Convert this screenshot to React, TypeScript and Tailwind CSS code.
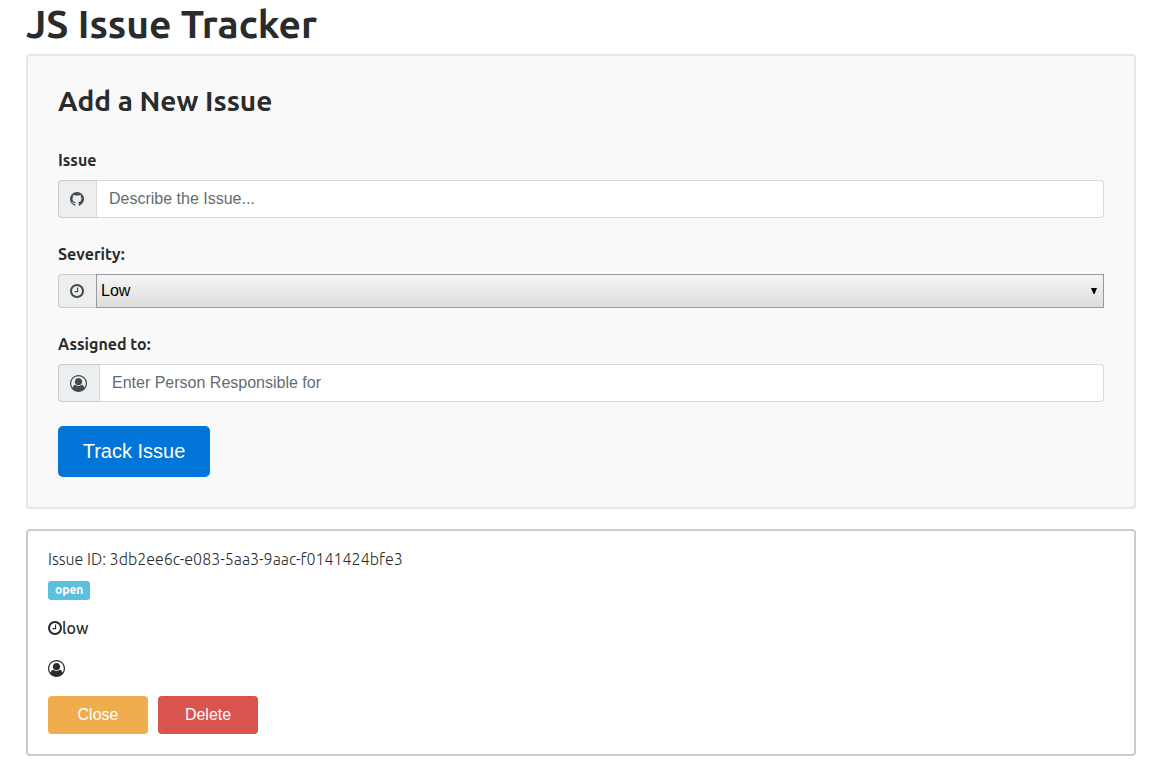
import React, { FormEvent, ReactNode } from "react";

const labelClass =
  "mb-2 block text-base leading-6 font-bold";

const inputClass =
  "h-[38px] min-w-0 flex-1 rounded-r border border-black/15 bg-white px-3 font-['Liberation_Sans',sans-serif] text-base text-[#464a4c] placeholder:text-[#636c72]";

const buttonClass =
  "h-[38px] w-[100px] rounded font-['Liberation_Sans',sans-serif] text-base text-white";

function ClockIcon() {
  return (
    <svg viewBox="0 0 1536 1536" className="h-3.5 w-3.5 shrink-0" fill="currentColor" aria-hidden="true">
      <path d="M896 416v448q0 14-9 23t-23 9H544q-14 0-23-9t-9-23v-64q0-14 9-23t23-9h224V416q0-14 9-23t23-9h64q14 0 23 9t9 23zm416 352q0-148-73-273t-198-198-273-73-273 73-198 198-73 273 73 273 198 198 273 73 273-73 198-198 73-273zm224 0q0 209-103 385.500T1153.500 1433 768 1536t-385.500-103T103 1153.500 0 768t103-385.500T382.500 103 768 0t385.500 103T1433 382.500 1536 768z" />
    </svg>
  );
}

function UserIcon() {
  return (
    <svg viewBox="0 0 1792 1792" className="h-[17px] w-[17px] shrink-0" fill="currentColor" aria-hidden="true">
      <path d="M896 0q182 0 348 71t286 191 191 286 71 348q0 181-70.500 347t-190.500 286-286 191.500T896 1792t-349-71-285.500-191.500-190.500-286T0 896t71-348 191-286T548 71 896 0zm619 1351q149-205 149-455 0-156-61-298t-164-245-245-164-298-61-298 61-245 164-164 245-61 298q0 250 149 455 66-327 306-327 131 128 313 128t313-128q240 0 306 327zm-235-647q0-159-112.500-271.500T896 320 624.500 432.500 512 704t112.500 271.500T896 1088t271.500-112.500T1280 704z" />
    </svg>
  );
}

function GithubIcon() {
  return (
    <svg viewBox="0 0 1536 1536" className="h-3.5 w-3.5 shrink-0" fill="currentColor" aria-hidden="true">
      <path d="M768 0q209 0 385.500 103T1433 382.500 1536 768q0 251-146.500 451.500T1011 1497q-27 5-40-7t-13-30v-211q0-97-52-142 57-6 102.500-18t94-39 81-66.500 53-105T1257 728q0-119-79-206 37-91-8-204-28-9-81 11t-92 44l-38 24q-93-26-192-26t-192 26q-16-11-42.500-27T449 331.500 364 318q-45 113-8 204-79 87-79 206 0 85 20.500 150t52.500 105 80.500 67 94 39 102.500 18q-39 36-49 103-21 10-45 15t-57 5-65.500-21.500T356 1146q-19-32-48.500-52t-49.500-24l-20-3q-21 0-29 4.500t-5 11.500 9 14 13 12l7 5q22 10 43.500 38t31.500 51l10 23q13 38 44 61.500t67 30 69.500 7 55.500-3.500l23-4v143q0 18-13 30t-40 7q-232-77-378.500-277.500T0 768q0-209 103-385.500T382.500 103 768 0z" />
    </svg>
  );
}

function Addon({ children }: { children: ReactNode }) {
  return (
    <span className="flex shrink-0 items-center rounded-l border border-r-0 border-black/15 bg-[#eceeef] pr-3 pl-[11px] text-[#464a4c]">
      {children}
    </span>
  );
}

export default function App() {
  const handleSubmit = (e: FormEvent) => e.preventDefault();

  return (
    <main className="pr-[29px] pb-6 pl-[26px] font-['Ubuntu','Noto_Sans',sans-serif] text-[#292b2c]">
      <h1 className="mb-1.5 text-[39px] leading-[48px] font-bold">JS Issue Tracker</h1>

      <section className="mb-5 rounded border-2 border-[#e7e7e7] bg-[#f9f9f9] p-[30px]">
        <h2 className="mb-8 text-[28px] leading-[30px] font-bold">Add a New Issue</h2>
        <form onSubmit={handleSubmit}>
          <div className="mb-6">
            <label htmlFor="issue" className={labelClass}>Issue</label>
            <div className="flex">
              <Addon><GithubIcon /></Addon>
              <input id="issue" type="text" placeholder="Describe the Issue..." className={inputClass} />
            </div>
          </div>

          <div className="mb-6">
            <label htmlFor="severity" className={labelClass}>Severity:</label>
            <div className="flex">
              <Addon><ClockIcon /></Addon>
              <div className="relative flex min-w-0 flex-1">
                <select
                  id="severity"
                  defaultValue="low"
                  className="h-[34px] w-full appearance-none border border-[#999999] bg-linear-to-b from-[#f6f6f6] to-[#dddddd] px-1 font-['Liberation_Sans',sans-serif] text-base text-black"
                >
                  <option value="low">Low</option>
                  <option value="medium">Medium</option>
                  <option value="high">High</option>
                </select>
                <svg viewBox="0 0 6 6" className="pointer-events-none absolute top-3.5 right-[7px] h-1.5 w-1.5" aria-hidden="true">
                  <path d="M0 0h6L3.500 6h-1z" fill="#000" />
                </svg>
              </div>
            </div>
          </div>

          <div className="mb-6">
            <label htmlFor="assignee" className={labelClass}>Assigned to:</label>
            <div className="flex">
              <Addon><UserIcon /></Addon>
              <input id="assignee" type="text" placeholder="Enter Person Responsible for" className={inputClass} />
            </div>
          </div>

          <button
            type="submit"
            className="block h-[51px] w-[152px] rounded-[5px] bg-[#0275d8] pb-0.5 font-['Liberation_Sans',sans-serif] text-xl text-white"
          >
            Track Issue
          </button>
        </form>
      </section>

      <section className="rounded border-2 border-[#cccccc] bg-white p-5">
        <h3 className="mb-2 text-base leading-[17px] font-light">
          Issue ID: 3db2ee6c-e083-5aa3-9aac-f0141424bfe3
        </h3>
        <p className="mb-4 flex h-6 items-end">
          <span className="rounded-[3px] bg-[#5bc0de] px-[7px] pb-px text-xs leading-[18px] font-bold text-white">open</span>
        </p>
        <p className="mb-4 flex items-center text-base leading-6 font-medium">
          <ClockIcon />
          low
        </p>
        <p className="mb-4 flex h-6 items-center">
          <UserIcon />
        </p>
        <div className="flex gap-2.5">
          <button type="button" className={`${buttonClass} bg-[#f0ad4e]`}>Close</button>
          <button type="button" className={`${buttonClass} bg-[#d9534f]`}>Delete</button>
        </div>
      </section>
    </main>
  );
}
